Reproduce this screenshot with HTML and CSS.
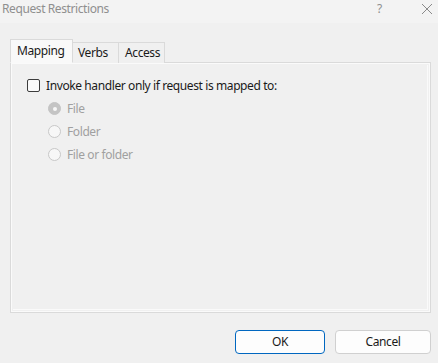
FILE: index.html
```html
<!DOCTYPE html>
<html>
<head>
<meta charset="utf-8">
<link rel="stylesheet" href="styles.css">
</head>
<body>
<div class="dialog">
  <div class="titlebar">
    <span class="title">Request Restrictions</span>
    <span class="help">?</span>
    <span class="close">
      <svg width="12" height="12" viewBox="0 0 12 12"><path d="M1 1L11 11M11 1L1 11" stroke="#8a8a8a" stroke-width="1" fill="none"/></svg>
    </span>
  </div>
  <div class="body">
    <div class="tabs">
      <div class="tab active">Mapping</div>
      <div class="tab">Verbs</div>
      <div class="tab">Access</div>
    </div>
    <div class="panel">
      <label class="check-row">
        <span class="checkbox"></span>
        <span>Invoke handler only if request is mapped to:</span>
      </label>
      <div class="radios">
        <div class="radio-row"><span class="radio checked"></span><span>File</span></div>
        <div class="radio-row"><span class="radio"></span><span>Folder</span></div>
        <div class="radio-row"><span class="radio"></span><span>File or folder</span></div>
      </div>
    </div>
    <div class="buttons">
      <div class="btn default">OK</div>
      <div class="btn">Cancel</div>
    </div>
  </div>
</div>
</body>
</html>
```
FILE: styles.css
```css
html, body {
  margin: 0;
  padding: 0;
}
body {
  background: #f0f0f0;
  font-family: "Noto Sans", "Open Sans", sans-serif;
  font-size: 12px;
  letter-spacing: -0.4px;
  color: #1a1a1a;
}
.dialog {
  width: 438px;
  height: 363px;
  display: flex;
  flex-direction: column;
}
.titlebar {
  height: 23px;
  background: #f3f3f3;
  display: flex;
  align-items: center;
  color: #8f8f8f;
}
.title {
  margin-left: 2px;
  flex: 1;
  margin-top: -6px;
}
.help {
  margin-top: -6px;
  width: 12px;
  margin-right: 32px;
}
.close {
  margin-top: -6px;
  margin-right: 5px;
  display: flex;
}
.body {
  padding: 16px 7px 0 10px;
  display: flex;
  flex-direction: column;
}
.tabs {
  display: flex;
  align-items: flex-end;
  height: 24px;
  position: relative;
  z-index: 1;
  margin-bottom: -1px;
}
.tab {
  height: 21px;
  box-sizing: border-box;
  border: 1px solid #dadada;
  border-bottom: none;
  background: #f0f0f0;
  padding: 0 6px 0 4px;
  line-height: 20px;
  margin-left: -1px;
}
.tab:first-child { margin-left: 0; }
.tab.active {
  height: 24px;
  background: #f9f9f9;
  padding: 0 6px;
  line-height: 22px;
  border-color: #dadada;
  z-index: 2;
  border-bottom: 1px solid #f9f9f9;
}
.tab:nth-child(2) { width: 47px; padding-left: 5px; }
.tab:nth-child(3) { width: 47px; padding-left: 6px; }
.tab.active { width: 63px; }
.panel {
  height: 251px;
  box-sizing: border-box;
  border: 1px solid #dadada;
  box-shadow: inset 1px 1px 0 #fafafa, inset -1px -1px 0 #fafafa, inset 2px 2px 0 #f0f0f0, inset -2px -2px 0 #f0f0f0, inset -3px -3px 0 #fafafa;
  background: #f0f0f0;
  padding: 15px 16px 0 16px;
}
.check-row {
  display: flex;
  align-items: center;
  gap: 6px;
  height: 15px;
}
.checkbox {
  width: 11px;
  height: 11px;
  border: 1px solid #3c3c3c;
  border-radius: 2px;
  background: #fafafa;
}
.radios {
  padding-left: 21px;
  padding-top: 9px;
  display: flex;
  flex-direction: column;
  gap: 10px;
  color: #a0a0a0;
}
.radio-row {
  display: flex;
  align-items: center;
  gap: 6px;
  height: 13px;
}
.radio {
  width: 11px;
  height: 11px;
  border: 1px solid #c8c8c8;
  border-radius: 50%;
  background: #f7f7f7;
  position: relative;
}
.radio.checked {
  background: #c4c4c4;
  border-color: #c4c4c4;
}
.radio.checked::after {
  content: "";
  position: absolute;
  left: 3.5px;
  top: 3.5px;
  width: 4px;
  height: 4px;
  border-radius: 50%;
  background: #f7f7f7;
}
.buttons {
  display: flex;
  justify-content: flex-end;
  gap: 10px;
  margin-top: 17px;
  padding-right: 0;
}
.btn {
  width: 96px;
  height: 24px;
  box-sizing: border-box;
  border: 1px solid #d0d0d0;
  border-radius: 4px;
  background: #fdfdfd;
  text-align: center;
  line-height: 22px;
  color: #1a1a1a;
}
.btn.default {
  width: 90px;
  border-color: #0067c0;
}
```
